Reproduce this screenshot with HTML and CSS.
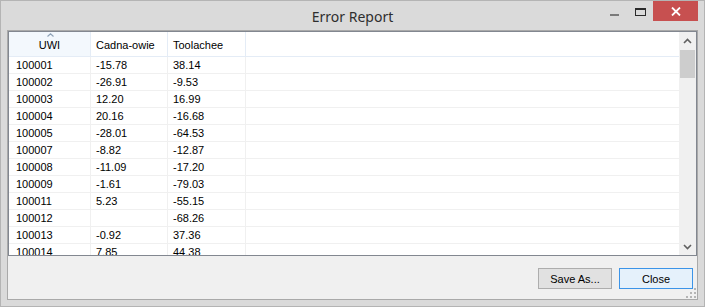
FILE: index.html
```html
<!DOCTYPE html>
<html>
<head>
<meta charset="utf-8">
<link rel="stylesheet" href="styles.css">
</head>
<body>
<div class="window">
  <div class="titlebar">
    <div class="tb-spacer"></div>
    <div class="title">Error Report</div>
    <div class="caption">
      <div class="cap"><span class="min-line"></span></div>
      <div class="cap"><span class="max-box"></span></div>
      <div class="cap close">
        <svg width="10" height="9" viewBox="0 0 10 9"><path d="M1 0.5 L9 8.5 M9 0.5 L1 8.5" stroke="#fff" stroke-width="1.8" fill="none"/></svg>
      </div>
    </div>
  </div>
  <div class="client">
    <div class="grid">
      <div class="grid-body">
        <div class="row header">
          <div class="cell c1 sorted">UWI<svg class="sort" width="7" height="4" viewBox="0 0 7 4"><path d="M0.5 3.5 L3.5 0.8 L6.5 3.5" stroke="#8fa3b8" stroke-width="1.2" fill="none"/></svg></div>
          <div class="cell c2">Cadna-owie</div>
          <div class="cell c3">Toolachee</div>
          <div class="cell fill"></div>
        </div>
        <div class="row"><div class="cell c1">100001</div><div class="cell c2">-15.78</div><div class="cell c3">38.14</div><div class="cell fill"></div></div>
        <div class="row"><div class="cell c1">100002</div><div class="cell c2">-26.91</div><div class="cell c3">-9.53</div><div class="cell fill"></div></div>
        <div class="row"><div class="cell c1">100003</div><div class="cell c2">12.20</div><div class="cell c3">16.99</div><div class="cell fill"></div></div>
        <div class="row"><div class="cell c1">100004</div><div class="cell c2">20.16</div><div class="cell c3">-16.68</div><div class="cell fill"></div></div>
        <div class="row"><div class="cell c1">100005</div><div class="cell c2">-28.01</div><div class="cell c3">-64.53</div><div class="cell fill"></div></div>
        <div class="row"><div class="cell c1">100007</div><div class="cell c2">-8.82</div><div class="cell c3">-12.87</div><div class="cell fill"></div></div>
        <div class="row"><div class="cell c1">100008</div><div class="cell c2">-11.09</div><div class="cell c3">-17.20</div><div class="cell fill"></div></div>
        <div class="row"><div class="cell c1">100009</div><div class="cell c2">-1.61</div><div class="cell c3">-79.03</div><div class="cell fill"></div></div>
        <div class="row"><div class="cell c1">100011</div><div class="cell c2">5.23</div><div class="cell c3">-55.15</div><div class="cell fill"></div></div>
        <div class="row"><div class="cell c1">100012</div><div class="cell c2"></div><div class="cell c3">-68.26</div><div class="cell fill"></div></div>
        <div class="row"><div class="cell c1">100013</div><div class="cell c2">-0.92</div><div class="cell c3">37.36</div><div class="cell fill"></div></div>
        <div class="row"><div class="cell c1">100014</div><div class="cell c2">7.85</div><div class="cell c3">44.38</div><div class="cell fill"></div></div>
      </div>
      <div class="vscroll">
        <div class="sb-btn"><svg width="9" height="6" viewBox="0 0 9 6"><path d="M1 5 L4.5 1.5 L8 5" stroke="#606060" stroke-width="1.6" fill="none"/></svg></div>
        <div class="sb-track"><div class="sb-thumb"></div></div>
        <div class="sb-btn"><svg width="9" height="6" viewBox="0 0 9 6"><path d="M1 1 L4.5 4.5 L8 1" stroke="#606060" stroke-width="1.6" fill="none"/></svg></div>
      </div>
    </div>
    <div class="footer">
      <button class="btn">Save As...</button>
      <button class="btn default">Close</button>
      <svg class="grip" width="10" height="10" viewBox="0 0 10 10">
        <rect x="8" y="0" width="2" height="2" fill="#b5b5b5"/>
        <rect x="4" y="4" width="2" height="2" fill="#b5b5b5"/>
        <rect x="8" y="4" width="2" height="2" fill="#b5b5b5"/>
        <rect x="0" y="8" width="2" height="2" fill="#b5b5b5"/>
        <rect x="4" y="8" width="2" height="2" fill="#b5b5b5"/>
        <rect x="8" y="8" width="2" height="2" fill="#b5b5b5"/>
      </svg>
    </div>
  </div>
</div>
</body>
</html>
```
FILE: styles.css
```css
html, body {
  margin: 0;
  padding: 0;
}
body {
  width: 705px;
  height: 307px;
  overflow: hidden;
  font-family: "Liberation Sans", Arial, sans-serif;
  font-size: 11px;
}
.window {
  box-sizing: border-box;
  width: 705px;
  height: 307px;
  background: #dadada;
  border: 1px solid #b4b4b4;
  display: flex;
  flex-direction: column;
}
.titlebar {
  height: 29px;
  flex: none;
  display: grid;
  grid-template-columns: 1fr auto 1fr;
}
.title {
  align-self: center;
  font-family: "Noto Sans", "Open Sans", sans-serif;
  font-size: 14px;
  color: #2e2e2e;
  padding-top: 1px;
}
.caption {
  justify-self: end;
  align-self: start;
  display: flex;
  margin-right: 6px;
}
.cap {
  width: 26px;
  height: 20px;
  display: flex;
  align-items: center;
  justify-content: center;
}
.min-line {
  width: 9px;
  height: 2px;
  background: #7a7a7a;
  margin-top: 7px;
}
.max-box {
  box-sizing: border-box;
  width: 11px;
  height: 8px;
  border: 1px solid #2a2a2a;
  border-top-width: 2px;
  margin-top: 2px;
}
.cap.close {
  width: 45px;
  background: #c75050;
}
.client {
  flex: 1;
  margin: 0 6px 6px 6px;
  border: 1px solid #a9a9a9;
  background: #f0f0f0;
  display: flex;
  flex-direction: column;
}
.grid {
  height: 225px;
  flex: none;
  box-sizing: border-box;
  border: 1px solid #828790;
  background: #fff;
  display: flex;
}
.grid-body {
  flex: 1;
  overflow: hidden;
}
.row {
  display: flex;
  height: 17px;
  box-sizing: border-box;
  border-bottom: 1px solid #f0f0f0;
}
.row.header {
  height: 25px;
  border-bottom: 1px solid #e4ecf6;
}
.cell {
  box-sizing: border-box;
  height: 100%;
  border-right: 1px solid #f0f0f0;
  display: flex;
  align-items: center;
  padding-left: 5px;
  color: #000;
  white-space: nowrap;
}
.header .cell {
  border-right: 1px solid #e4ecf6;
  padding-top: 1px;
}
.c1 { width: 82px; padding-left: 7px; }
.c2 { width: 77px; }
.c3 { width: 78px; }
.fill { flex: 1; border-right: none; }
.header .fill { border-right: none; }
.header .c1 {
  justify-content: center;
  padding-left: 0;
  position: relative;
}
.sorted {
  background: #f3f8fd;
}
.sort {
  position: absolute;
  top: 1px;
  left: 38px;
}
.vscroll {
  width: 17px;
  flex: none;
  background: #f0f0f0;
  display: flex;
  flex-direction: column;
}
.sb-btn {
  height: 17px;
  flex: none;
  display: flex;
  align-items: center;
  justify-content: center;
}
.sb-track {
  flex: 1;
  padding: 1px 1px 0 1px;
}
.sb-thumb {
  height: 28px;
  background: #cdcdcd;
}
.footer {
  flex: 1;
  position: relative;
  display: flex;
  justify-content: flex-end;
  align-items: flex-start;
  gap: 7px;
  padding: 12px 4px 0 0;
}
.btn {
  box-sizing: border-box;
  width: 74px;
  height: 21px;
  background: #e1e1e1;
  border: 1px solid #adadad;
  font-family: "Liberation Sans", Arial, sans-serif;
  font-size: 11px;
  color: #000;
  padding: 0;
  margin: 0;
}
.btn.default {
  border-color: #3c94e8;
  background: #e5f1fb;
}
.grip {
  position: absolute;
  right: 1px;
  bottom: 1px;
}
```
